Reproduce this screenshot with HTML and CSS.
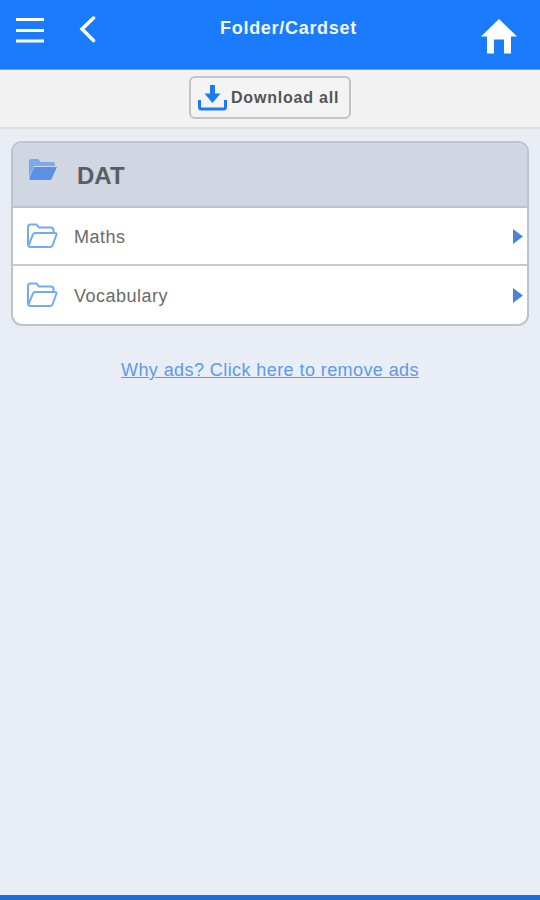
FILE: index.html
```html
<!DOCTYPE html>
<html>
<head>
    <meta charset="UTF-8">
    <meta name="viewport" content="width=device-width, initial-scale=1.0">
    <title>Folder/Cardset</title>
    <link rel="stylesheet" href="styles.css">
</head>
<body>
    <div class="page">
        <div class="header">
            <div class="header-left">
                <svg class="menu-icon" width="30" height="26" viewBox="0 0 30 26">
                    <path d="M1 2.500H29M1 13.500H29M1 24H29" fill="none" stroke="#fff" stroke-width="3"/>
                </svg>
                <svg class="back-icon" width="18" height="28" viewBox="0 0 18 28">
                    <path d="M15.500 2L4 13L15.500 24.500" fill="none" stroke="#fff" stroke-width="3.500" stroke-linecap="round"/>
                </svg>
            </div>
            <h1>Folder/Cardset</h1>
            <svg class="home-icon" width="36" height="36" viewBox="0 0 36 36">
                <path d="M18 0L0 17.500H6V34.500H13V20.500H23V34.500H30V17.500H36Z" fill="#fff"/>
            </svg>
        </div>

        <div class="toolbar">
            <button class="download-btn">
                <svg width="29" height="26" viewBox="0 0 29 26">
                    <path d="M14.500 0V10" fill="none" stroke="#1a7cf5" stroke-width="5"/>
                    <path d="M6.500 8.500H22.500L14.500 18Z" fill="#1a7cf5"/>
                    <path d="M1.500 15V22Q1.500 24 3.500 24H25.500Q27.500 24 27.500 22V15" fill="none" stroke="#1a7cf5" stroke-width="3"/>
                </svg>
                <span>Download all</span>
            </button>
        </div>

        <div class="content">
            <div class="folder-list">
                <div class="folder-head">
                    <svg class="head-folder" width="30" height="24" viewBox="0 0 30 24">
                        <path d="M1 20V3Q1 1 3 1H10L13 4H25Q27 4 27 6V8H6L1 20Z" fill="#7ea9e6"/>
                        <path d="M6 9H29L24 20Q23.500 22 22 22H2.500Q1 22 1.500 20Z" fill="#5b90e4"/>
                    </svg>
                    <span>DAT</span>
                </div>
                <div class="folder-row">
                    <svg class="row-folder" width="32" height="26" viewBox="0 0 32 26">
                        <path d="M2 21V4Q2 1.500 4.500 1.500H10.500L13 4.500H25Q27.500 4.500 27.500 7V10M2 21Q2 24 4.500 24H24Q26 24 26.500 22.500L30.500 11.500Q31 10 29 10H9Q7.500 10 7 11.500L2.500 22.500" fill="none" stroke="#73abf3" stroke-width="2"/>
                    </svg>
                    <span class="row-label">Maths</span>
                    <svg class="arrow" width="10" height="15" viewBox="0 0 10 15">
                        <path d="M0 0L10 7.500L0 15Z" fill="#4a83d8"/>
                    </svg>
                </div>
                <div class="folder-row">
                    <svg class="row-folder" width="32" height="26" viewBox="0 0 32 26">
                        <path d="M2 21V4Q2 1.500 4.500 1.500H10.500L13 4.500H25Q27.500 4.500 27.500 7V10M2 21Q2 24 4.500 24H24Q26 24 26.500 22.500L30.500 11.500Q31 10 29 10H9Q7.500 10 7 11.500L2.500 22.500" fill="none" stroke="#73abf3" stroke-width="2"/>
                    </svg>
                    <span class="row-label">Vocabulary</span>
                    <svg class="arrow" width="10" height="15" viewBox="0 0 10 15">
                        <path d="M0 0L10 7.500L0 15Z" fill="#4a83d8"/>
                    </svg>
                </div>
            </div>

            <a class="ads-link" href="#">Why ads? Click here to remove ads</a>
        </div>

        <div class="footer"></div>
    </div>
</body>
</html>
```

FILE: styles.css
```css
* {
    box-sizing: border-box;
}

html, body {
    margin: 0;
    padding: 0;
    height: 100%;
    overflow: hidden;
    font-family: "Liberation Sans", Arial, sans-serif;
    background: #e9edf6;
}

.page {
    height: 900px;
    display: flex;
    flex-direction: column;
}

.header {
    height: 70px;
    flex-shrink: 0;
    background: #1a7cfd;
    border-bottom: 1px solid #6aa8fa;
    display: flex;
    align-items: flex-start;
    padding: 16px 23px 0 15px;
}

.header-left {
    display: flex;
    align-items: center;
    gap: 33px;
}

.header h1 {
    flex: 1;
    margin: 1px 0 0;
    text-align: center;
    font-size: 18px;
    line-height: 22px;
    font-weight: bold;
    letter-spacing: 0.7px;
    color: #f2f7ff;
}

.home-icon {
    margin-top: 3px;
}

.toolbar {
    height: 59px;
    flex-shrink: 0;
    background: #f2f2f2;
    border-bottom: 2px solid #dedede;
    display: flex;
    justify-content: center;
    padding-top: 6px;
}

.download-btn {
    width: 162px;
    height: 43px;
    margin: 0;
    padding: 0 0 0 7px;
    display: flex;
    align-items: center;
    gap: 4px;
    font-family: inherit;
    font-size: 16px;
    font-weight: bold;
    letter-spacing: 0.8px;
    color: #555;
    background: #f4f4f4;
    border: 2px solid #c4c4c4;
    border-radius: 6px;
}

.download-btn span {
    margin-top: 1px;
}

.content {
    flex: 1;
    padding: 12px 11px 0 11px;
    display: flex;
    flex-direction: column;
}

.folder-list {
    background: #fff;
    border: 2px solid #c0c3c9;
    border-radius: 11px;
    overflow: hidden;
}

.folder-head {
    height: 65px;
    background: #d0d6e2;
    border-bottom: 2px solid #c0c3c9;
    display: flex;
    align-items: center;
    padding: 0 0 0 15px;
    font-size: 24px;
    font-weight: bold;
    color: #5a5d62;
}

.folder-head span {
    margin-left: 19px;
    margin-top: 2px;
}

.head-folder {
    margin-top: -9px;
}

.folder-row {
    height: 58px;
    display: flex;
    align-items: center;
    padding: 0 4px 0 13px;
    border-bottom: 2px solid #c8c9cc;
    font-size: 18px;
    letter-spacing: 0.5px;
    color: #6a6a6a;
}

.folder-row:last-child {
    border-bottom: 0;
}

.row-folder {
    margin-top: -1px;
}

.row-label {
    flex: 1;
    margin-left: 16px;
    margin-top: 3px;
}

.ads-link {
    margin-top: 34px;
    text-align: center;
    font-size: 18px;
    letter-spacing: 0.42px;
    color: #5c9bec;
}

.footer {
    height: 5px;
    flex-shrink: 0;
    background: #1d70dc;
}
```
